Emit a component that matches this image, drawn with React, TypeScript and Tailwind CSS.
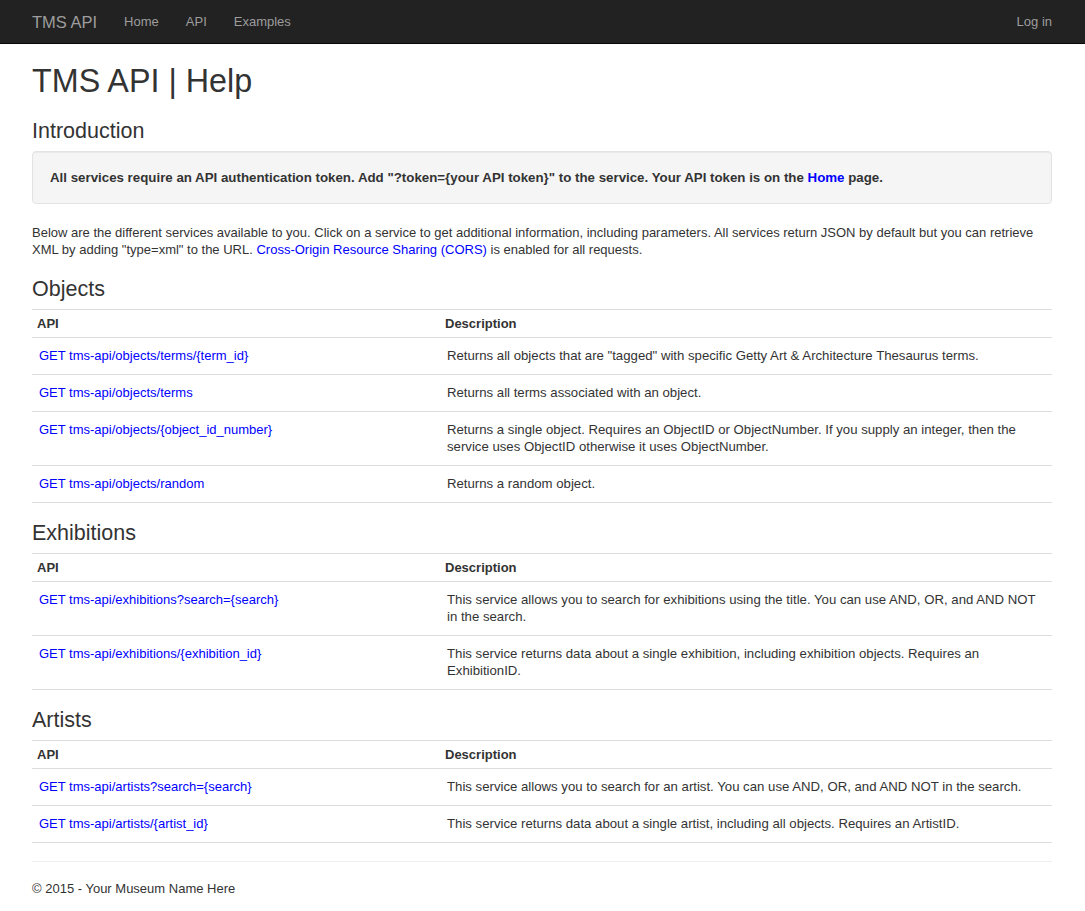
import React from "react";

type Row = { api: string; desc: string };

const sections: { title: string; rows: Row[] }[] = [
  {
    title: "Objects",
    rows: [
      {
        api: "GET tms-api/objects/terms/{term_id}",
        desc: 'Returns all objects that are "tagged" with specific Getty Art & Architecture Thesaurus terms.',
      },
      { api: "GET tms-api/objects/terms", desc: "Returns all terms associated with an object." },
      {
        api: "GET tms-api/objects/{object_id_number}",
        desc: "Returns a single object. Requires an ObjectID or ObjectNumber. If you supply an integer, then the service uses ObjectID otherwise it uses ObjectNumber.",
      },
      { api: "GET tms-api/objects/random", desc: "Returns a random object." },
    ],
  },
  {
    title: "Exhibitions",
    rows: [
      {
        api: "GET tms-api/exhibitions?search={search}",
        desc: "This service allows you to search for exhibitions using the title. You can use AND, OR, and AND NOT in the search.",
      },
      {
        api: "GET tms-api/exhibitions/{exhibition_id}",
        desc: "This service returns data about a single exhibition, including exhibition objects. Requires an ExhibitionID.",
      },
    ],
  },
  {
    title: "Artists",
    rows: [
      {
        api: "GET tms-api/artists?search={search}",
        desc: "This service allows you to search for an artist. You can use AND, OR, and AND NOT in the search.",
      },
      {
        api: "GET tms-api/artists/{artist_id}",
        desc: "This service returns data about a single artist, including all objects. Requires an ArtistID.",
      },
    ],
  },
];

function Section({ title, rows, first }: { title: string; rows: Row[]; first?: boolean }) {
  return (
    <div>
      <h3 className={`text-[21.5px] leading-[26px] font-normal ${first ? "mt-[18px]" : "mt-[17px]"}`}>{title}</h3>
      <table className="w-full mt-[7px] border-collapse table-fixed">
        <thead>
          <tr className="border-t border-b border-[#ddd]">
            <th className="w-[40%] text-left font-bold pl-[5px] pt-[5px] pb-[5px]">API</th>
            <th className="text-left font-bold pl-[5px] pt-[5px] pb-[5px]">Description</th>
          </tr>
        </thead>
        <tbody>
          {rows.map((r) => (
            <tr key={r.api} className="border-b border-[#ddd]">
              <td className="align-top pl-[7px] pr-[7px] pt-[9px] pb-[10px]">
                <a href="#" className="text-[#0000ff]">{r.api}</a>
              </td>
              <td className="align-top pl-[7px] pr-[7px] pt-[9px] pb-[10px] text-[13.2px]">{r.desc}</td>
            </tr>
          ))}
        </tbody>
      </table>
    </div>
  );
}

export default function App() {
  return (
    <div className="min-h-screen bg-white text-[#333] font-['Liberation_Sans',Arial,sans-serif] text-[13px] leading-[17px]">
      <nav className="h-[44px] bg-[#222] border-b border-[#080808] flex items-center pl-[32px] pr-[33px] text-[#9d9d9d]">
        <a href="#" className="text-[16.5px] leading-[20px]">TMS API</a>
        <div className="flex items-center gap-[27px] ml-[27px]">
          <a href="#">Home</a>
          <a href="#">API</a>
          <a href="#">Examples</a>
        </div>
        <a href="#" className="ml-auto">Log in</a>
      </nav>
      <main className="pl-[32px] pr-[33px]">
        <h1 className="mt-[17px] text-[32.3px] leading-[40px] font-normal">TMS API | Help</h1>
        <h3 className="mt-[17px] text-[21.5px] leading-[26px] font-normal">Introduction</h3>
        <div className="mt-[7px] bg-[#f5f5f5] border border-[#e3e3e3] rounded-[4px] shadow-[inset_0_1px_1px_rgba(0,0,0,0.05)] px-[17px] pt-[17px] pb-[17px]">
          <p className="font-bold text-[13.3px]">
            All services require an API authentication token. Add "?token={"{your API token}"}" to the service. Your API token is on the{" "}
            <a href="#" className="text-[#0000ff]">Home</a> page.
          </p>
        </div>
        <p className="mt-[20px]">
          Below are the different services available to you. Click on a service to get additional information, including parameters. All services return JSON by default but you can retrieve XML by adding "type=xml" to the URL.{" "}
          <a href="#" className="text-[#0000ff]">Cross-Origin Resource Sharing (CORS)</a> is enabled for all requests.
        </p>
        {sections.map((s, i) => (
          <Section key={s.title} title={s.title} rows={s.rows} first={i === 0} />
        ))}
        <hr className="mt-[18px] border-0 border-t border-[#eee]" />
        <footer className="mt-[18px] pb-[14px]">
          <p>© 2015 - Your Museum Name Here</p>
        </footer>
      </main>
    </div>
  );
}
